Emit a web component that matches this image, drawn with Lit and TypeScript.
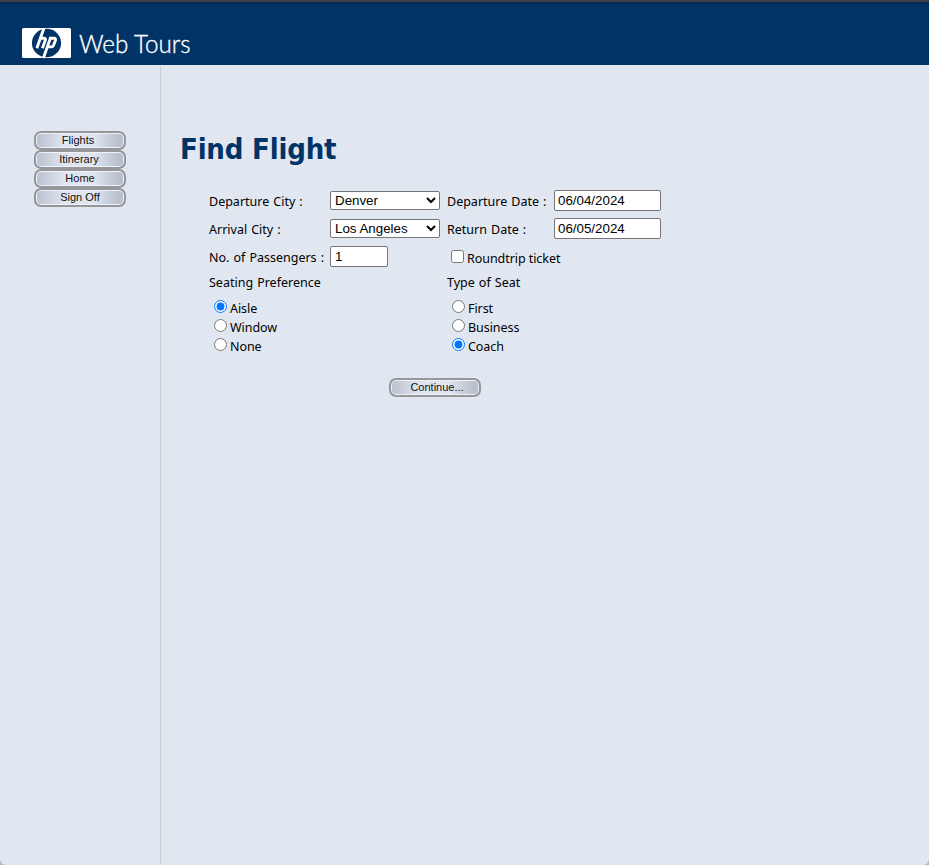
import { LitElement, html, css, svg } from "lit";
import { customElement, property } from "lit/decorators.js";

@customElement("pill-button")
class PillButton extends LitElement {
  @property() label = "";
  @property({ type: Number }) shift = 0;
  static styles = css`
    :host { display: block; width: 92px; height: 19px; }
    .pill {
      box-sizing: border-box; width: 92px; height: 19px; padding: 0; margin: 0; display: block;
      border: 2px solid #96979b; border-radius: 7px;
      box-shadow: inset 0 0 0 1px #eff2f8;
      background: linear-gradient(90deg, #bcc3d0 0, #c2c9d6 8%, #e0e6f0 32%, #e0e6f0 66%, #bbc2cf 92%, #b7becc 100%);
      font: 11px/14px "Liberation Sans", Arial, sans-serif; color: #111; text-align: center;
    }
    .text { position: relative; top: -1px; }
  `;
  render() {
    return html`<button class="pill"><span class="text" style="left:${this.shift}px">${this.label}</span></button>`;
  }
}

@customElement("site-logo")
class SiteLogo extends LitElement {
  static styles = css`
    :host { display: block; }
    svg { display: block; }
    .name { font-family: Lato, sans-serif; font-weight: 300; font-size: 24.5px; fill: #fff; stroke: #fff; stroke-width: 0.35px; }
  `;
  render() {
    return html`<svg width="175" height="34" viewBox="0 0 175 34">
      ${svg`
        <rect width="49" height="30" rx="1.5" fill="#fff"/>
        <ellipse cx="24.5" cy="15" rx="14.6" ry="14.3" fill="#003366"/>
        <g fill="none" stroke="#fff" stroke-width="2.9">
          <path d="M22 0L14.8 20.3M18.4 10.3H22Q24 10.3 23.3 12.2L20.4 20.3"/>
          <path d="M28.8 9L21.4 30M28 10.3H32Q34.2 10.3 33.4 12.4L31.4 17.6Q30.8 18.9 29.4 18.9H26"/>
        </g>
        <text class="name" x="57" y="25.3" textLength="111.5" lengthAdjust="spacingAndGlyphs">Web Tours</text>
      `}
    </svg>`;
  }
}

@customElement("app-root")
class AppRoot extends LitElement {
  static styles = css`
    :host { display: block; height: 865px; background: #fff; overflow: hidden; }
    .window {
      height: 865px; display: flex; flex-direction: column; overflow: hidden;
      background: #b5b7ba;
      font: 12.5px/16px "Noto Sans", sans-serif;
      color: #000;
    }
    .top {
      box-sizing: border-box; height: 65px; flex: none; padding: 26px 0 0 22px;
      border-top: 2px solid #3c4043;
      background: linear-gradient(#002b57, #003366 5px);
    }
    .main { flex: 1; display: flex; background: #e0e7f1; border-radius: 0 0 6px 6px; }
    .side { box-sizing: border-box; width: 161px; margin-top: 1px; border-right: 1px solid #cccccc; padding: 65px 0 0 34px; }
    .content { padding: 64px 0 0 19px; }
    h1 {
      margin: 0; height: 40px; color: #003366; white-space: nowrap; letter-spacing: -0.2px;
      font: bold 29px/40px "DejaVu Sans Condensed", "DejaVu Sans", sans-serif; font-stretch: condensed;
    }
    .form {
      display: grid; grid-template-columns: 121px 117px 107px 107px;
      grid-template-rows: 28px 28px 28px 24px; margin: 18px 0 0 29px;
    }
    .cell { white-space: nowrap; padding-top: 7px; word-spacing: 0.8px; }
    .span2 { grid-column: span 2; }
    .head { padding-top: 4px; }
    .box { padding-top: 3px; }
    select, .text {
      box-sizing: border-box; display: block; border: 1px solid #767676; border-radius: 2px;
      background: #fff; color: #000; font: 13.333px "Liberation Sans", Arial, sans-serif; margin: 0;
    }
    select { width: 110px; height: 19px; margin-top: 1px; padding: 0; }
    .text { width: 107px; height: 21px; padding: 1px 3px; }
    .short { width: 58px; padding-left: 4px; }
    .choice { display: flex; height: 19px; white-space: nowrap; letter-spacing: -0.06px; }
    .choice input { width: 13px; height: 13px; margin: 1px 3px 0 5px; flex: none; }
    .choice .word { padding-top: 2px; }
    .round { padding-top: 6px; }
    .round input { margin-left: 4px; }
    .radios { display: grid; grid-template-columns: 238px 1fr; margin: 4px 0 0 29px; }
    .action { margin: 22px 0 0 209px; }
  `;

  field(label: string, cls = "") {
    return html`<div class="cell ${cls}">${label}</div>`;
  }
  select(value: string) {
    return html`<div class="box"><select><option>${value}</option></select></div>`;
  }
  entry(value: string, cls = "") {
    return html`<div class="box"><input class="text ${cls}" .value=${value} /></div>`;
  }
  radios(name: string, items: string[], chosen: string) {
    return html`<div>${items.map((i) => html`<label class="choice">
      <input type="radio" name=${name} .checked=${i === chosen} /><span class="word">${i}</span></label>`)}</div>`;
  }

  render() {
    return html`<div class="window">
      <header class="top"><site-logo></site-logo></header>
      <div class="main">
        <nav class="side">
          <pill-button label="Flights" shift="-2"></pill-button>
          <pill-button label="Itinerary" shift="-1"></pill-button>
          <pill-button label="Home"></pill-button>
          <pill-button label="Sign Off"></pill-button>
        </nav>
        <section class="content">
          <h1>Find Flight</h1>
          <div class="form">
            ${this.field("Departure City :")}${this.select("Denver")}
            ${this.field("Departure Date :")}${this.entry("06/04/2024")}
            ${this.field("Arrival City :")}${this.select("Los Angeles")}
            ${this.field("Return Date :")}${this.entry("06/05/2024")}
            ${this.field("No. of Passengers :")}${this.entry("1", "short")}
            <label class="choice span2 round"><input type="checkbox" /><span class="word">Roundtrip ticket</span></label>
            ${this.field("Seating Preference", "span2 head")}${this.field("Type of Seat", "span2 head")}
          </div>
          <div class="radios">
            ${this.radios("seat", ["Aisle", "Window", "None"], "Aisle")}
            ${this.radios("type", ["First", "Business", "Coach"], "Coach")}
          </div>
          <div class="action"><pill-button label="Continue..." shift="2"></pill-button></div>
        </section>
      </div>
    </div>`;
  }
}
